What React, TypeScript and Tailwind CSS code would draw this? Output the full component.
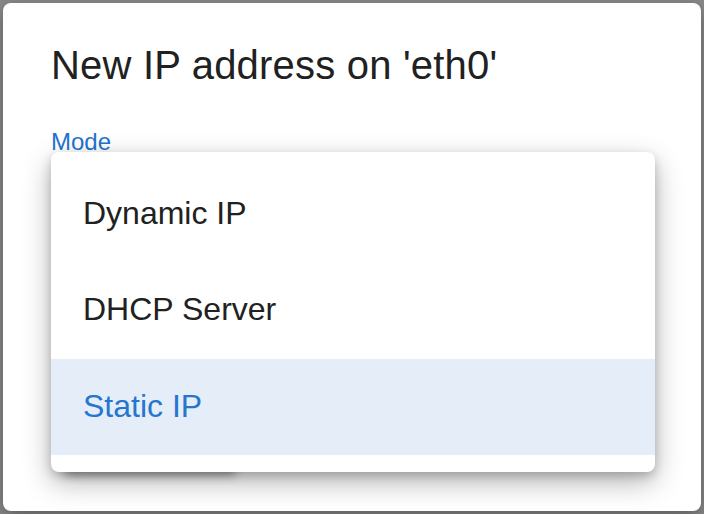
export default function App() {
  const items = ["Dynamic IP", "DHCP Server", "Static IP"];
  const selected = "Static IP";

  return (
    <div
      className="h-[514px] w-[704px] bg-[#8a8a8a] p-[3px]"
      style={{ fontFamily: '"Liberation Sans", Arial, sans-serif' }}
    >
      {/* Dialog */}
      <div className="relative h-full w-full rounded-[8px] bg-white px-[48px] pt-[30px] shadow-[0_6px_20px_rgba(0,0,0,0.35)]">
        <h2 className="text-[40px] leading-[64px] tracking-[0.2px] text-[#212121]">
          New IP address on 'eth0'
        </h2>

        <div className="mt-[33px]">
          <label className="block text-[24px] leading-[24px] text-[#1f74cf]">Mode</label>
          {/* button hidden under the menu, only its shadow shows */}
          <div className="ml-[6px] mt-[277px] h-[40px] w-[186px] bg-white shadow-[0_12px_10px_-8px_rgba(0,0,0,0.35)]" />
        </div>

        {/* Open select menu */}
        <ul className="absolute left-[48px] top-[149px] w-[604px] rounded-[8px] bg-white pb-[17px] pt-[15px] shadow-[0_10px_28px_rgba(0,0,0,0.3),0_4px_10px_rgba(0,0,0,0.18)]">
          {items.map((item) => (
            <li
              key={item}
              className={
                item === selected
                  ? "h-[96px] bg-[#e5edf8] px-[32px] pt-[1px] text-[32px] leading-[93px] text-[#2476cf]"
                  : "h-[96px] px-[32px] text-[32px] leading-[93px] text-[#212121]"
              }
            >
              {item}
            </li>
          ))}
        </ul>
      </div>
    </div>
  );
}
